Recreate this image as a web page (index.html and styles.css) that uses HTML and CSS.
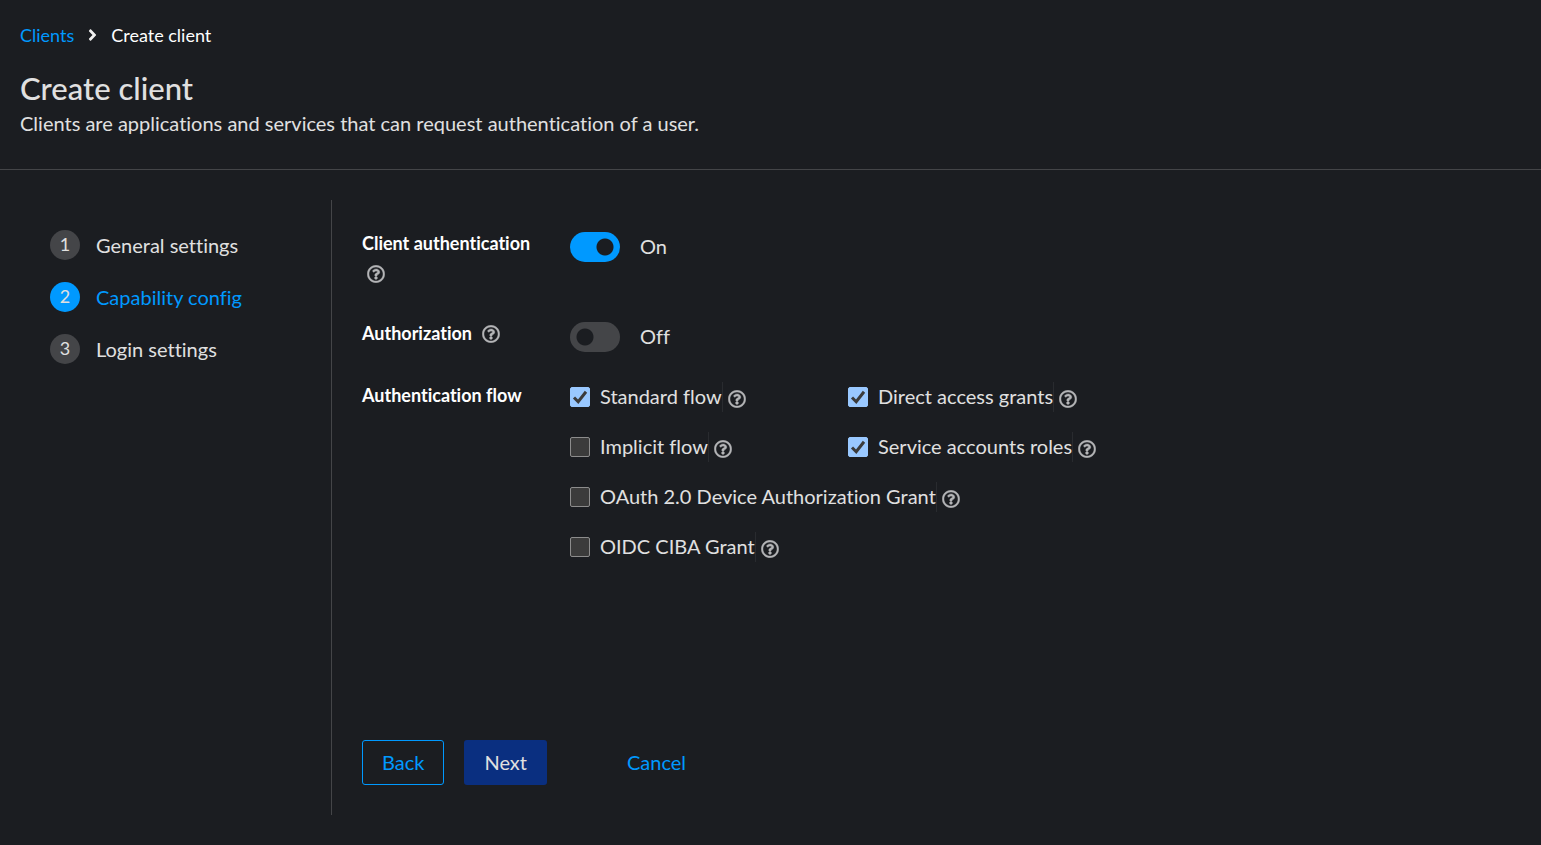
FILE: index.html
```html
<!DOCTYPE html>
<html lang="en">
<head>
<meta charset="utf-8">
<title>Create client</title>
<link rel="stylesheet" href="styles.css">
</head>
<body>
<svg class="sprite" aria-hidden="true">
  <symbol id="help" viewBox="0 0 512 512"><path d="M256 8C119.043 8 8 119.083 8 256c0 136.997 111.043 248 248 248s248-111.003 248-248C504 119.083 392.957 8 256 8zm0 448c-110.532 0-200-89.431-200-200 0-110.495 89.472-200 200-200 110.491 0 200 89.471 200 200 0 110.53-89.431 200-200 200zm107.244-255.2c0 67.052-72.421 68.084-72.421 92.863V300c0 6.627-5.373 12-12 12h-45.647c-6.627 0-12-5.373-12-12v-8.659c0-35.745 27.1-50.034 47.579-61.516 17.561-9.845 28.324-16.541 28.324-29.579 0-17.246-21.999-28.693-39.784-28.693-23.189 0-33.894 10.977-48.942 29.969-4.057 5.12-11.46 6.071-16.666 2.124l-27.824-21.098c-5.107-3.872-6.251-11.066-2.644-16.363C184.846 131.491 214.94 112 261.794 112c49.071 0 101.45 38.304 101.45 88.8zM298 368c0 23.159-18.841 42-42 42s-42-18.841-42-42 18.841-42 42-42 42 18.841 42 42z"/></symbol>
  <symbol id="tick" viewBox="0 0 20 20"><path d="M4 10.5l4.2 4.2L16 4.8" fill="none" stroke="#3b3b3b" stroke-width="3"/></symbol>
</svg>
<header class="page-header">
  <nav class="breadcrumb" aria-label="Breadcrumb">
    <a href="#clients">Clients</a>
    <svg class="chevron" viewBox="0 0 256 512" aria-hidden="true"><path d="M224.3 273l-136 136c-9.4 9.4-24.6 9.4-33.9 0l-22.6-22.6c-9.4-9.4-9.4-24.6 0-33.9l96.4-96.4-96.4-96.4c-9.4-9.4-9.4-24.6 0-33.9L54.3 103c9.4-9.4 24.6-9.4 33.9 0l136 136c9.5 9.4 9.5 24.6.1 34z"/></svg>
    <span class="current">Create client</span>
  </nav>
  <h1 class="title">Create client</h1>
  <p class="subtitle">Clients are applications and services that can request authentication of a user.</p>
</header>
<div class="wizard">
  <nav class="steps" aria-label="Wizard steps">
    <ol class="step-list">
      <li><button class="step" type="button"><span class="step-number">1</span><span>General settings</span></button></li>
      <li><button class="step step-current" type="button" aria-current="step"><span class="step-number">2</span><span>Capability config</span></button></li>
      <li><button class="step" type="button"><span class="step-number">3</span><span>Login settings</span></button></li>
    </ol>
  </nav>
  <main class="panel">
    <form class="form">
      <div class="row">
        <div class="row-label row-label-tall">
          <label for="client-auth">Client authentication</label>
          <button class="help help-spaced" type="button" aria-label="More help for client authentication"><svg><use href="#help"/></svg></button>
        </div>
        <label class="switch">
          <input id="client-auth" type="checkbox" role="switch" checked>
          <span>On</span>
        </label>
      </div>
      <div class="row">
        <div class="row-label">
          <label for="authorization">Authorization</label>
          <button class="help help-spaced" type="button" aria-label="More help for authorization"><svg><use href="#help"/></svg></button>
        </div>
        <label class="switch">
          <input id="authorization" type="checkbox" role="switch">
          <span>Off</span>
        </label>
      </div>
      <div class="row" role="group" aria-labelledby="flow-label">
        <div class="row-label row-label-text"><span id="flow-label">Authentication flow</span></div>
        <div class="flows">
          <div class="flow"><span class="box"><input id="standard" type="checkbox" checked><svg><use href="#tick"/></svg></span><label for="standard">Standard flow</label><button class="help" type="button" aria-label="More help for standard flow"><svg><use href="#help"/></svg></button></div>
          <div class="flow"><span class="box"><input id="direct" type="checkbox" checked><svg><use href="#tick"/></svg></span><label for="direct">Direct access grants</label><button class="help" type="button" aria-label="More help for direct access grants"><svg><use href="#help"/></svg></button></div>
          <div class="flow"><span class="box"><input id="implicit" type="checkbox"><svg><use href="#tick"/></svg></span><label for="implicit">Implicit flow</label><button class="help" type="button" aria-label="More help for implicit flow"><svg><use href="#help"/></svg></button></div>
          <div class="flow"><span class="box"><input id="service" type="checkbox" checked><svg><use href="#tick"/></svg></span><label for="service">Service accounts roles</label><button class="help" type="button" aria-label="More help for service accounts roles"><svg><use href="#help"/></svg></button></div>
          <div class="flow flow-wide"><span class="box"><input id="device" type="checkbox"><svg><use href="#tick"/></svg></span><label for="device">OAuth 2.0 Device Authorization Grant</label><button class="help" type="button" aria-label="More help for device grant"><svg><use href="#help"/></svg></button></div>
          <div class="flow flow-wide"><span class="box"><input id="ciba" type="checkbox"><svg><use href="#tick"/></svg></span><label for="ciba">OIDC CIBA Grant</label><button class="help" type="button" aria-label="More help for CIBA grant"><svg><use href="#help"/></svg></button></div>
        </div>
      </div>
    </form>
    <footer class="actions">
      <button class="button button-secondary" type="button">Back</button>
      <button class="button button-primary" type="button">Next</button>
      <button class="button button-link" type="button">Cancel</button>
    </footer>
  </main>
</div>
</body>
</html>
```
FILE: styles.css
```css
* {
  box-sizing: border-box;
}

body {
  display: flex;
  flex-direction: column;
  min-height: 100vh;
  margin: 0;
  background: #1b1d21;
  color: #e0e0e0;
  font: 20px/30px Lato, sans-serif;
  font-variant-ligatures: none;
}

button {
  padding: 0;
  border: 0;
  background: none;
  color: inherit;
  font: inherit;
  font-variant-ligatures: none;
  cursor: pointer;
}

.sprite {
  position: absolute;
  width: 0;
  height: 0;
}

.page-header {
  padding: 21px 20px 31px;
  border-bottom: 1px solid #444548;
}

.breadcrumb {
  display: flex;
  align-items: center;
  font-size: 18px;
  line-height: 28px;
}

.breadcrumb a {
  color: #0099ff;
  text-decoration: none;
}

.chevron {
  width: 9px;
  height: 18px;
  margin: 0 14px;
  fill: #f0f0f0;
}

.current {
  color: #ffffff;
}

.title {
  margin: 20px 0 0;
  font-size: 31px;
  font-weight: 500;
  line-height: 39px;
}

.subtitle {
  margin: 0;
}

.wizard {
  display: flex;
  flex: 1;
  padding: 30px 0;
}

.steps {
  width: 332px;
  padding: 30px 50px;
  border-right: 1px solid #444548;
}

.step-list {
  display: grid;
  gap: 22px;
  margin: 0;
  padding: 0;
  list-style: none;
}

.step {
  display: flex;
  gap: 16px;
}

.step-number {
  width: 30px;
  height: 30px;
  border-radius: 50%;
  background: #444548;
  font-size: 18px;
  line-height: 28px;
}

.step-current {
  color: #0099ff;
}

.step-current .step-number {
  background: #0099ff;
  color: #e0e0e0;
}

.panel {
  display: flex;
  flex: 1;
  flex-direction: column;
  justify-content: space-between;
  padding: 32px 30px 30px;
}

.form {
  display: grid;
  gap: 30px;
}

.row {
  display: grid;
  grid-template-columns: 188px 1fr;
  column-gap: 20px;
}

.row-label {
  display: flex;
  flex-wrap: wrap;
  align-content: flex-start;
  gap: 8px 5px;
  color: #ffffff;
  font-size: 18px;
  font-weight: 700;
  line-height: 22px;
}

.row-label-tall {
  padding-bottom: 6px;
}

.row-label-text {
  padding-top: 2px;
}

.help {
  display: flex;
  align-items: center;
  height: 24px;
}

.help svg {
  width: 18px;
  height: 18px;
  fill: #b5b6b8;
  stroke: #b5b6b8;
  stroke-width: 12px;
}

.help-spaced {
  margin-left: 5px;
}

.switch {
  display: flex;
  gap: 20px;
  height: 30px;
  line-height: 28px;
}

.switch input {
  width: 50px;
  height: 30px;
  margin: 0;
  border-radius: 15px;
  appearance: none;
  background: radial-gradient(circle at 15px 15px, #1b1d21 8px, #444548 9px);
}

.switch input:checked {
  background: radial-gradient(circle at 35px 15px, #1b1d21 8px, #0099ff 9px);
}

.flows {
  display: grid;
  grid-template-columns: 278px 1fr;
  row-gap: 20px;
}

.flow {
  display: flex;
  align-items: center;
}

.flow-wide {
  grid-column: 1 / -1;
}

.box {
  display: grid;
  margin-right: 10px;
}

.box input,
.box svg {
  grid-area: 1 / 1;
  width: 20px;
  height: 20px;
}

.box input {
  margin: 0;
  border: 1px solid #8c8c8c;
  border-radius: 2px;
  appearance: none;
  background: #3b3b3b;
}

.box svg {
  display: none;
  pointer-events: none;
}

.box input:checked {
  border-color: #99c8ff;
  background: #99c8ff;
}

.box input:checked + svg {
  display: block;
}

.flow label {
  padding-bottom: 2px;
  border-right: 1px solid #292b2f;
  line-height: 28px;
}

.flow .help {
  margin: 3px 0 0 5px;
}

.actions {
  display: flex;
  gap: 20px;
}

.button {
  padding: 7px 19px;
  border: 1px solid transparent;
  border-radius: 3px;
  line-height: 29px;
}

.button-secondary {
  border-color: #0099ff;
  color: #0099ff;
}

.button-primary {
  background: #0a2f80;
}

.button-link {
  margin-left: 40px;
  color: #0099ff;
}
```
